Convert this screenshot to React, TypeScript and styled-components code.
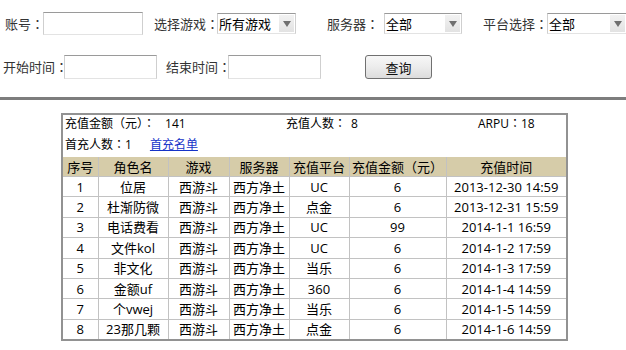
import React from 'react'
import styled, { createGlobalStyle } from 'styled-components'

const GlobalStyle = createGlobalStyle`
  html, body {
    margin: 0;
    padding: 0;
    background: #fff;
  }
  body {
    font-family: "Open Sans", "Noto Sans CJK SC", sans-serif;
    color: #111;
  }
`

const Page = styled.div`
  width: 626px;
  overflow: hidden;
`

const Filters = styled.div`
  padding-top: 12px;
`

const FilterRow = styled.div<{ $h: number; $top?: number; $pl: number }>`
  display: flex;
  align-items: center;
  height: ${p => p.$h}px;
  margin-top: ${p => p.$top || 0}px;
  padding-left: ${p => p.$pl}px;
  font-size: 13px;
  white-space: nowrap;
`

const LabelText = styled.span<{ $w: number; $ml?: number }>`
  flex: none;
  width: ${p => p.$w}px;
  margin-left: ${p => p.$ml || 0}px;
  color: #333;
  line-height: 16px;
`

// centred full-width colon, as the original font draws it
const Colon = styled.span`
  font-family: "Noto Sans CJK JP", sans-serif;
`

const TextBox = styled.input<{ $w: number }>`
  box-sizing: border-box;
  flex: none;
  width: ${p => p.$w}px;
  height: 100%;
  margin: 0;
  padding: 0 3px;
  border: 1px solid #cfcfcf;
  border-top-color: #9a9a9a;
  border-bottom-color: #e3e3e3;
  background: #fff;
  outline: none;
`

const SelectBox = styled.div<{ $w: number }>`
  box-sizing: border-box;
  flex: none;
  display: flex;
  align-items: center;
  width: ${p => p.$w}px;
  height: 21px;
  border: 1px solid #cfcfcf;
  border-top-color: #9a9a9a;
  border-bottom-color: #e3e3e3;
  background: #fff;
  color: #000;
`

const SelectText = styled.span`
  flex: 1;
  padding-left: 1px;
  line-height: 16px;
`

const SelectArrow = styled.span`
  flex: none;
  width: 15px;
  height: 17px;
  margin-right: 1px;
  display: flex;
  align-items: center;
  justify-content: center;
  background: linear-gradient(#f2f2f2, #e2e2e2);
  &::after {
    content: '';
    border-left: 4px solid transparent;
    border-right: 4px solid transparent;
    border-top: 6px solid #6f6f6f;
  }
`

const QueryButton = styled.button<{ $ml: number }>`
  box-sizing: border-box;
  flex: none;
  width: 67px;
  height: 24px;
  margin-left: ${p => p.$ml}px;
  border: 1px solid #707070;
  border-radius: 3px;
  background: linear-gradient(#f7f7f7 0%, #ececec 50%, #dcdcdc 100%);
  font-family: inherit;
  font-size: 13px;
  color: #111;
  padding: 0;
`

const Divider = styled.div`
  height: 3px;
  margin-top: 18px;
  background: #7d7d7d;
`

const Report = styled.div`
  box-sizing: border-box;
  width: 507px;
  margin: 13px 0 0 61px;
  border: 2px solid #929292;
  font-size: 12px;
  color: #000;
`

const SummaryRow = styled.div<{ $h: number }>`
  display: grid;
  grid-template-columns: 221px 192px 1fr;
  align-items: center;
  height: ${p => p.$h}px;
  padding-left: 2px;
  line-height: 16px;
  white-space: nowrap;
`

const Value = styled.span<{ $ml: number }>`
  margin-left: ${p => p.$ml}px;
`

const SummaryLink = styled.a`
  margin-left: 18px;
  color: #1533c8;
  text-decoration: underline;
`

const Table = styled.table`
  width: 100%;
  border-collapse: collapse;
  border-style: hidden;
  table-layout: fixed;
  font-size: 13px;

  th,
  td {
    border: 1px solid #c2c2c2;
    padding: 0;
    text-align: center;
    white-space: nowrap;
    line-height: 16px;
  }
  th {
    height: 19px;
    background: #d6cca9;
    font-weight: normal;
  }
  td {
    height: 19.4px;
  }
`

const columns = [35, 70, 61, 60, 60, 97, 120]
const headers = ['序号', '角色名', '游戏', '服务器', '充值平台', '充值金额（元）', '充值时间']

const rows = [
  ['1', '位居', '西游斗', '西方净土', 'UC', '6', '2013-12-30 14:59'],
  ['2', '杜渐防微', '西游斗', '西方净土', '点金', '6', '2013-12-31 15:59'],
  ['3', '电话费看', '西游斗', '西方净土', 'UC', '99', '2014-1-1 16:59'],
  ['4', '文件kol', '西游斗', '西方净土', 'UC', '6', '2014-1-2 17:59'],
  ['5', '非文化', '西游斗', '西方净土', '当乐', '6', '2014-1-3 17:59'],
  ['6', '金额uf', '西游斗', '西方净土', '360', '6', '2014-1-4 14:59'],
  ['7', '个vwej', '西游斗', '西方净土', '当乐', '6', '2014-1-5 14:59'],
  ['8', '23那几颗', '西游斗', '西方净土', '点金', '6', '2014-1-6 14:59'],
]

function Label({ w, ml, text }: { w: number; ml?: number; text: string }) {
  return (
    <LabelText $w={w} $ml={ml}>
      {text}
      <Colon>：</Colon>
    </LabelText>
  )
}

function Select({ w, value }: { w: number; value: string }) {
  return (
    <SelectBox $w={w}>
      <SelectText>{value}</SelectText>
      <SelectArrow />
    </SelectBox>
  )
}

export default function App() {
  return (
    <Page>
      <GlobalStyle />
      <Filters>
        <FilterRow $h={23} $pl={5}>
          <Label w={38} text="账号" />
          <TextBox $w={100} />
          <Label w={63} ml={11} text="选择游戏" />
          <Select w={79} value="所有游戏" />
          <Label w={57} ml={31} text="服务器" />
          <Select w={78} value="全部" />
          <Label w={64} ml={21} text="平台选择" />
          <Select w={80} value="全部" />
        </FilterRow>
        <FilterRow $h={24} $top={20} $pl={3}>
          <Label w={61} text="开始时间" />
          <TextBox $w={93} />
          <Label w={62} ml={9} text="结束时间" />
          <TextBox $w={93} />
          <QueryButton $ml={44}>查询</QueryButton>
        </FilterRow>
      </Filters>
      <Divider />
      <Report>
        <SummaryRow $h={17}>
          <span>
            充值金额（元）<Colon>：</Colon>
            <Value $ml={10}>141</Value>
          </span>
          <span>
            充值人数<Colon>：</Colon>
            <Value $ml={5}>8</Value>
          </span>
          <span>
            ARPU<Colon>：</Colon>18
          </span>
        </SummaryRow>
        <SummaryRow $h={25}>
          <span>
            首充人数<Colon>：</Colon>1<SummaryLink href="#">首充名单</SummaryLink>
          </span>
        </SummaryRow>
        <Table>
          <colgroup>
            {columns.map((w, i) => (
              <col key={i} style={{ width: w }} />
            ))}
          </colgroup>
          <thead>
            <tr>
              {headers.map(h => (
                <th key={h}>{h}</th>
              ))}
            </tr>
          </thead>
          <tbody>
            {rows.map(r => (
              <tr key={r[0]}>
                {r.map((c, i) => (
                  <td key={i}>{c}</td>
                ))}
              </tr>
            ))}
          </tbody>
        </Table>
      </Report>
    </Page>
  )
}
